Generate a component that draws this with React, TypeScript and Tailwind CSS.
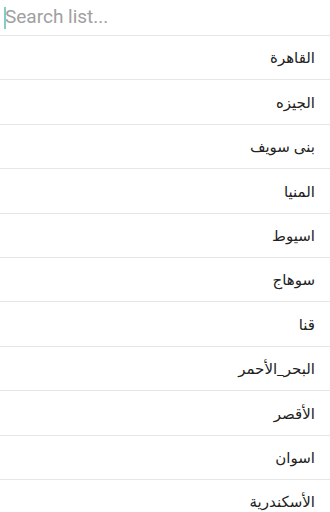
import React from "react";

const items = [
  "القاهرة",
  "الجيزه",
  "بنى سويف",
  "المنيا",
  "اسيوط",
  "سوهاج",
  "قنا",
  "البحر_الأحمر",
  "الأقصر",
  "اسوان",
  "الأسكندرية",
];

export default function App() {
  return (
    <div className="w-[330px] h-[512px] overflow-hidden bg-white">
      <div className="relative h-[36px] border-b border-[#e6e6e6] flex items-center">
        <div className="absolute left-[4px] top-[7px] w-[2px] h-[22px] bg-[#7fcfc6]" />
        <input
          className="w-full h-full pl-[5px] pb-[2px] text-[19px] text-[#333] placeholder:text-[#a0a0a0] outline-none bg-transparent font-['Roboto',sans-serif]"
          placeholder="Search list..."
        />
      </div>
      <div className="flex flex-col">
        {items.map((t) => (
          <div
            key={t}
            dir="rtl"
            className="h-[44.4px] shrink-0 border-b border-[#e6e6e6] flex items-center pr-[15px] text-[15px] text-[#222] font-['Noto_Sans','DejaVu_Sans',sans-serif]"
          >
            {t}
          </div>
        ))}
      </div>
    </div>
  );
}
